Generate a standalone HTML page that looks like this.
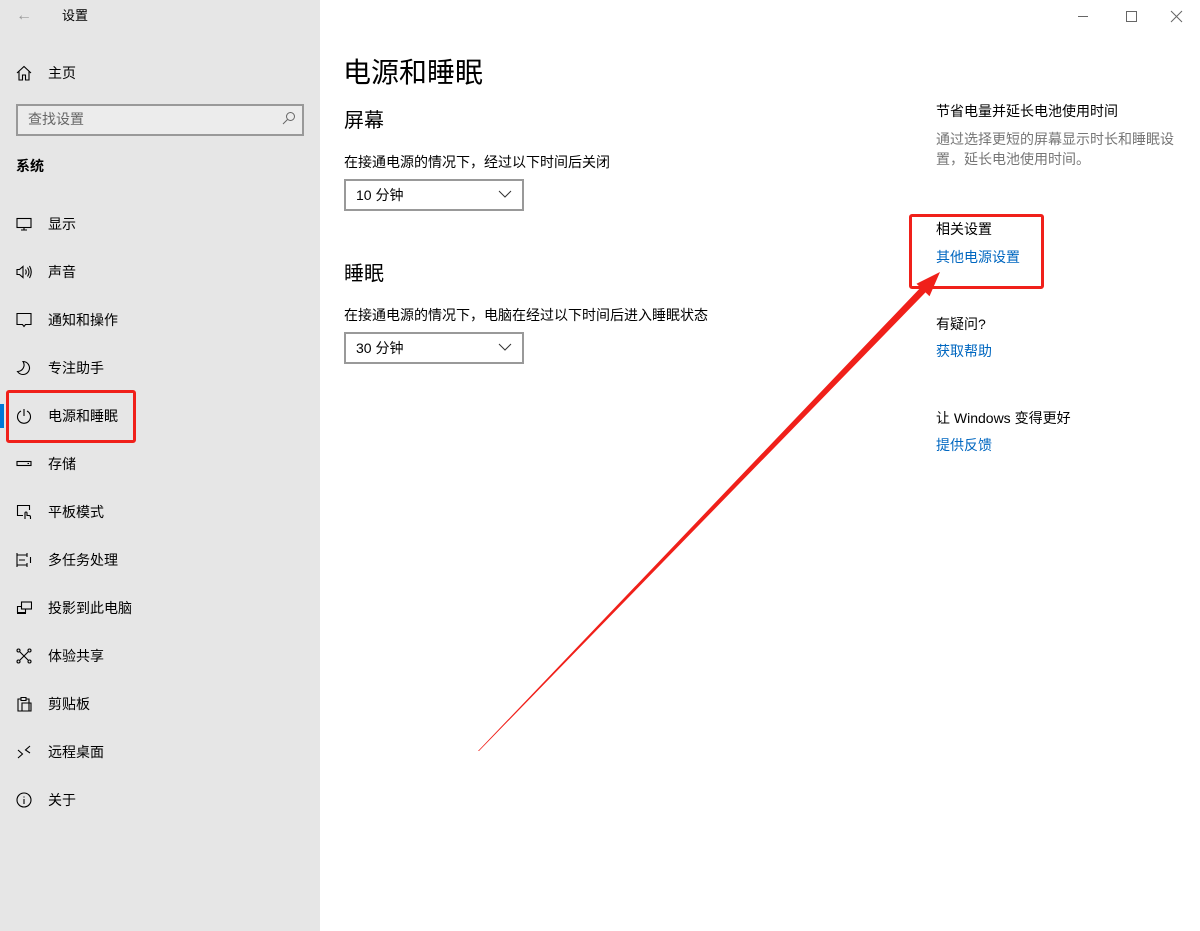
<!DOCTYPE html>
<html><head><meta charset="utf-8"><style>
*{margin:0;padding:0;box-sizing:border-box}
body{width:1200px;height:931px;background:#fff;font-family:"Liberation Sans","Noto Sans CJK SC",sans-serif;color:#000;position:relative;overflow:hidden}
.side{position:absolute;left:0;top:0;width:320px;height:931px;background:#e6e6e6}
.a{position:absolute;font-size:14px;line-height:20px;white-space:nowrap}
.ic{position:absolute;left:16px;width:16px;height:16px}
.sel{position:absolute;left:0;top:404px;width:4px;height:24px;background:#0078d7}
.dd{position:absolute;left:344px;width:180px;height:32px;border:2px solid #999;font-size:14px;line-height:28px;padding-left:10px}
.dd svg{position:absolute;right:10px;top:9px}
.b{color:#0067c0}
.g{color:#767676}
</style></head><body>
<div class="side">
<div class="a" style="left:16px;top:6px;color:#999;font-size:16px">←</div>
<div class="a" style="left:62px;top:6px;font-size:13px">设置</div>
<svg class="ic" style="top:65px" viewBox="0 0 16 16" fill="none" stroke="#000" stroke-width="1.1"><path d="M1 8L8 1.5 15 8M3 6.5V15h3.5v-5h3v5H13V6.5"/></svg>
<div class="a" style="left:48px;top:63px">主页</div>
<div style="position:absolute;left:16px;top:104px;width:288px;height:32px;border:2px solid #999;background:#ececec"></div>
<div class="a" style="left:28px;top:109px;color:#666">查找设置</div>
<svg style="position:absolute;left:282px;top:111px" width="14" height="14" viewBox="0 0 14 14" fill="none" stroke="#666" stroke-width="1"><circle cx="8.5" cy="5.5" r="4"/><path d="M5.5 8.5L1 13"/></svg>
<div class="a" style="left:16px;top:156px;font-weight:bold">系统</div>
<svg class="ic" style="top:216px" viewBox="0 0 16 16" fill="none" stroke="#000" stroke-width="1.1"><rect x="1" y="2.5" width="14" height="9"/><path d="M8 11.5v2.5M5 14h6"/></svg>
<div class="a" style="left:48px;top:214px">显示</div>
<svg class="ic" style="top:264px" viewBox="0 0 16 16" fill="none" stroke="#000" stroke-width="1.1"><path d="M1 5.5h2.5L7 2.5v11L3.5 10.5H1z"/><path d="M9.5 5.5q1.5 2.5 0 5M11.5 3.5q3 4.5 0 9M13.5 2q3.5 6 0 12"/></svg>
<div class="a" style="left:48px;top:262px">声音</div>
<svg class="ic" style="top:312px" viewBox="0 0 16 16" fill="none" stroke="#000" stroke-width="1.1"><path d="M1 1.5h14v11H9.5L8 14.5 6.5 12.5H1z"/></svg>
<div class="a" style="left:48px;top:310px">通知和操作</div>
<svg class="ic" style="top:360px" viewBox="0 0 16 16" fill="none" stroke="#000" stroke-width="1.1"><path d="M7 1.5A6.5 6.5 0 1 1 1.5 11.5 6.5 6.5 0 0 0 7 1.5z"/></svg>
<div class="a" style="left:48px;top:358px">专注助手</div>
<div class="sel"></div>
<svg class="ic" style="top:408px" viewBox="0 0 16 16" fill="none" stroke="#000" stroke-width="1.1"><path d="M5 3A6.5 6.5 0 1 0 11 3M8 1v7"/></svg>
<div class="a" style="left:48px;top:406px">电源和睡眠</div>
<svg class="ic" style="top:456px" viewBox="0 0 16 16" fill="none" stroke="#000" stroke-width="1.1"><rect x="1" y="5.5" width="14" height="4"/><path d="M11.5 7.5h1.5"/></svg>
<div class="a" style="left:48px;top:454px">存储</div>
<svg class="ic" style="top:504px" viewBox="0 0 16 16" fill="none" stroke="#000" stroke-width="1.1"><path d="M7 11.5H1.5v-10h12V6"/><path d="M9 15v-6a1 1 0 0 1 2 0v2.5h2a1.5 1.5 0 0 1 1.5 1.5V15"/></svg>
<div class="a" style="left:48px;top:502px">平板模式</div>
<svg class="ic" style="top:552px" viewBox="0 0 16 16" fill="none" stroke="#000" stroke-width="1.1"><path d="M1 1v14M1 3h10M1 13h10M11 1v4M11 11v4M3 8h6M14.5 5v6"/></svg>
<div class="a" style="left:48px;top:550px">多任务处理</div>
<svg class="ic" style="top:600px" viewBox="0 0 16 16" fill="none" stroke="#000" stroke-width="1.1"><rect x="5.5" y="2" width="10" height="7"/><path d="M5.5 6.5H1.5v6h8v-3.5M1 13.5h9"/></svg>
<div class="a" style="left:48px;top:598px">投影到此电脑</div>
<svg class="ic" style="top:648px" viewBox="0 0 16 16" fill="none" stroke="#000" stroke-width="1.1"><circle cx="2.5" cy="2.5" r="1.5"/><circle cx="13.5" cy="2.5" r="1.5"/><circle cx="2.5" cy="13.5" r="1.5"/><circle cx="13.5" cy="13.5" r="1.5"/><path d="M4 4l8 8M12 4l-8 8"/></svg>
<div class="a" style="left:48px;top:646px">体验共享</div>
<svg class="ic" style="top:696px" viewBox="0 0 16 16" fill="none" stroke="#000" stroke-width="1.1"><path d="M5 3H2v12h11V3h-3M5 1.5h5v3H5zM6 7h9v8H6z"/></svg>
<div class="a" style="left:48px;top:694px">剪贴板</div>
<svg class="ic" style="top:744px" viewBox="0 0 16 16" fill="none" stroke="#000" stroke-width="1.1"><path d="M2 6l4.5 4L2 14M14 2L9.5 6 14 9"/></svg>
<div class="a" style="left:48px;top:742px">远程桌面</div>
<svg class="ic" style="top:792px" viewBox="0 0 16 16" fill="none" stroke="#000" stroke-width="1.1"><circle cx="8" cy="8" r="7"/><path d="M8 7v5M8 4.5v1"/></svg>
<div class="a" style="left:48px;top:790px">关于</div>
</div>
<div style="position:absolute;left:6px;top:390px;width:130px;height:53px;border:3px solid #f0201a;border-radius:3px"></div>

<svg style="position:absolute;left:1078px;top:10px" width="110" height="14" fill="none" stroke="#666" stroke-width="1"><path d="M0 6.5h10M48.5 1.5h10v10h-10zM93 1l11 11M104 1L93 12"/></svg>

<div class="a" style="left:343px;top:54px;font-size:28px;line-height:38px">电源和睡眠</div>
<div class="a" style="left:344px;top:107px;font-size:20px;line-height:28px">屏幕</div>
<div class="a" style="left:344px;top:152px">在接通电源的情况下，经过以下时间后关闭</div>
<div class="dd" style="top:179px">10 分钟<svg width="14" height="8" fill="none" stroke="#333" stroke-width="1"><path d="M1 1l6 6 6-6"/></svg></div>
<div class="a" style="left:344px;top:260px;font-size:20px;line-height:28px">睡眠</div>
<div class="a" style="left:344px;top:305px">在接通电源的情况下，电脑在经过以下时间后进入睡眠状态</div>
<div class="dd" style="top:332px">30 分钟<svg width="14" height="8" fill="none" stroke="#333" stroke-width="1"><path d="M1 1l6 6 6-6"/></svg></div>

<div class="a" style="left:936px;top:101px">节省电量并延长电池使用时间</div>
<div class="a g" style="left:936px;top:129px;line-height:20px;white-space:normal;width:250px">通过选择更短的屏幕显示时长和睡眠设置，延长电池使用时间。</div>
<div class="a" style="left:936px;top:219px">相关设置</div>
<div class="a b" style="left:936px;top:247px">其他电源设置</div>
<div class="a" style="left:936px;top:314px">有疑问?</div>
<div class="a b" style="left:936px;top:341px">获取帮助</div>
<div class="a" style="left:936px;top:408px">让 Windows 变得更好</div>
<div class="a b" style="left:936px;top:435px">提供反馈</div>
<div style="position:absolute;left:909px;top:214px;width:135px;height:75px;border:3px solid #f0201a;border-radius:3px"></div>
<svg style="position:absolute;left:0;top:0" width="1200" height="931"><polygon points="478,751 920.5,287.6 916.5,283.8 940,272 929.5,296.2 925.5,292.4 479,751" fill="#f0201a"/></svg>
</body></html>
